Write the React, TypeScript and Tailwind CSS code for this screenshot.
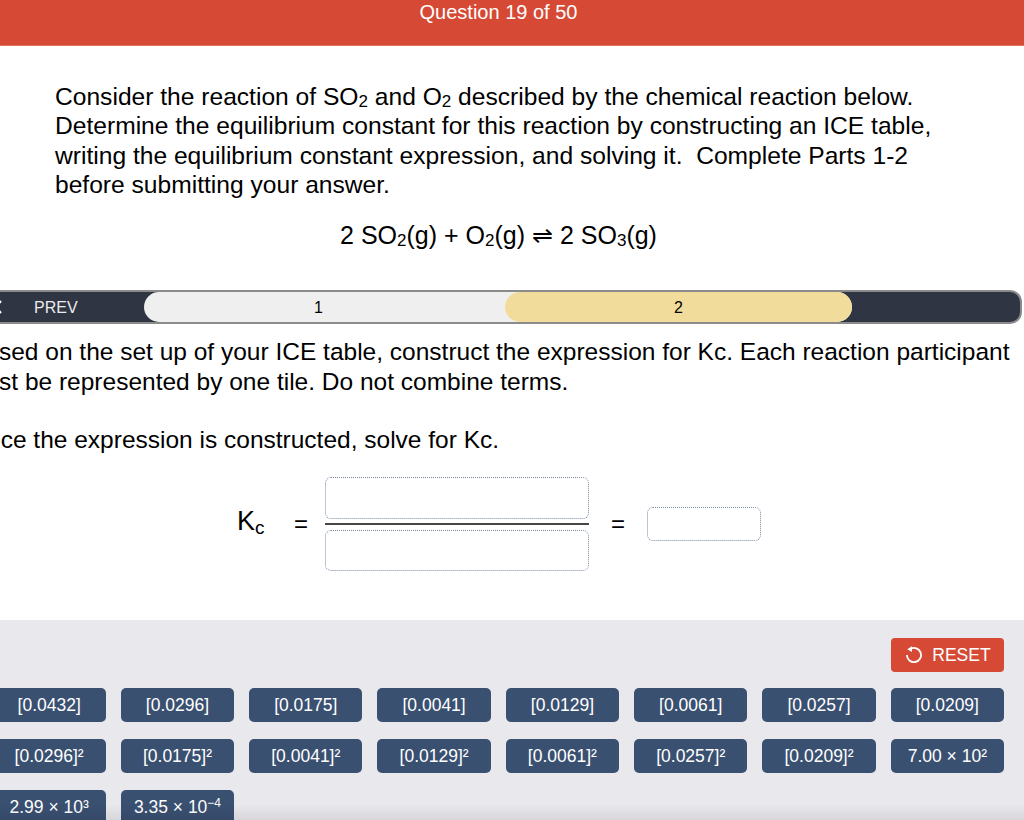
import React from "react";

const row1 = ["[0.0432]", "[0.0296]", "[0.0175]", "[0.0041]", "[0.0129]", "[0.0061]", "[0.0257]", "[0.0209]"];
const row2 = ["[0.0296]²", "[0.0175]²", "[0.0041]²", "[0.0129]²", "[0.0061]²", "[0.0257]²", "[0.0209]²", "7.00 × 10²"];

function Tile({ children }: { children: React.ReactNode }) {
  return (
    <div className="h-[34px] rounded-[5px] bg-[#3a5071] text-white text-[17.5px] flex items-center justify-center whitespace-nowrap">
      {children}
    </div>
  );
}

function Sub({ children }: { children: React.ReactNode }) {
  return <sub className="text-[17px] relative top-[2px] align-baseline">{children}</sub>;
}

export default function App() {
  return (
    <div className="relative w-[1024px] h-[820px] overflow-hidden bg-white font-['Liberation_Sans',Arial,sans-serif] text-black">
      {/* header */}
      <div className="h-[45px] bg-[#d64a35] text-white text-[20px] leading-[24px] text-center pr-[27px]">
        Question 19 of 50
      </div>
      <div className="h-[1px] bg-[#e6735f]" />

      {/* question */}
      <div className="ml-[55px] w-[887px] pt-[36px] text-[24.6px] leading-[29.3px]">
        <div className="whitespace-nowrap">
          Consider the reaction of SO<Sub>2</Sub> and O<Sub>2</Sub> described by the chemical reaction below.
        </div>
        <div className="whitespace-nowrap">
          Determine the equilibrium constant for this reaction by constructing an ICE table,
        </div>
        <div className="whitespace-nowrap">
          writing the equilibrium constant expression, and solving it.{"\u00a0"} Complete Parts 1-2
        </div>
        <div className="whitespace-nowrap">before submitting your answer.</div>
        <div className="mt-[22px] text-center whitespace-nowrap text-[25px]">
          2 SO<Sub>2</Sub>(g) + O<Sub>2</Sub>(g) ⇌ 2 SO<Sub>3</Sub>(g)
        </div>
      </div>

      {/* nav bar */}
      <div className="mt-[40px] -ml-[24px] w-[1046px] h-[34px] flex bg-[#2f3542] border-y-2 border-r-2 border-[#8b8b8b] rounded-r-[12px]">
        <div className="w-[168px] flex items-center shrink-0">
          <div className="w-[27px] flex justify-end">
            <svg width="9" height="14" viewBox="0 0 9 14" fill="none">
              <path d="M7 1 L2 7 L7 13" stroke="#ffffff" strokeWidth="2" />
            </svg>
          </div>
          <span className="ml-[31px] text-[16px] text-[#ececec] pt-[2px]">PREV</span>
        </div>
        <div className="w-[708px] shrink-0 flex rounded-full bg-[#efefef]">
          <div className="flex-1 flex items-center justify-center text-[16px] text-black pr-[12px] pt-[2px]">1</div>
          <div className="w-[347px] rounded-full bg-[#f2dc9c] flex items-center justify-center text-[16px] text-black pt-[2px]">
            2
          </div>
        </div>
        <div className="flex-1" />
      </div>

      {/* instructions */}
      <div className="-ml-[31px] mt-[13px] text-[24.5px] leading-[29.3px]">
        <div className="whitespace-nowrap">
          Based on the set up of your ICE table, construct the expression for Kc. Each reaction participant
        </div>
        <div className="whitespace-nowrap -ml-[4px]">must be represented by one tile. Do not combine terms.</div>
        <div className="whitespace-nowrap mt-[29.3px] -ml-[1px]">Once the expression is constructed, solve for Kc.</div>
      </div>

      {/* Kc expression */}
      <div className="mt-[22px] ml-[237px] flex items-center">
        <div className="w-[57px] text-[27px] leading-none -mt-[4px]">
          K<sub className="text-[19px] align-baseline relative top-[4px]">c</sub>
        </div>
        <div className="w-[31px] text-[24px] leading-none">=</div>
        <div className="w-[264px] flex flex-col">
          <div className="h-[42px] rounded-[6px] border border-dotted border-[#7a8aa3]" />
          <div className="mt-[4px] h-[2px] bg-[#474747]" />
          <div className="mt-[5px] h-[41px] rounded-[6px] border border-dotted border-[#7a8aa3]" />
        </div>
        <div className="ml-[22px] w-[36px] text-[24px] leading-none">=</div>
        <div className="w-[114px] h-[34px] rounded-[6px] border border-dotted border-[#7a8aa3]" />
      </div>

      {/* tile area */}
      <div className="mt-[49px] h-[220px] bg-[#e9e8ed] pt-[18px]">
        <div className="flex justify-end pr-[20px]">
          <div className="w-[113px] h-[34px] rounded-[4px] bg-[#d64a35] flex items-center justify-center gap-[8px] text-white text-[17.5px]">
            <svg width="20" height="20" viewBox="0 0 24 24" fill="none">
              <path d="M7.75 4.64 A8.5 8.5 0 1 1 3.5 12" stroke="#ffffff" strokeWidth="2.2" fill="none" />
              <polygon points="3.8,5.2 9.6,1.4 9.6,8.4" fill="#ffffff" />
            </svg>
            <span>RESET</span>
          </div>
        </div>
        <div className="mt-[16px] -ml-[7.5px] w-[1011.5px] grid grid-cols-8 gap-x-[15px] gap-y-[17px]">
          {row1.map((t) => (
            <Tile key={t}>{t}</Tile>
          ))}
          {row2.map((t) => (
            <Tile key={t}>{t}</Tile>
          ))}
          <Tile>2.99 × 10³</Tile>
          <Tile>
            3.35 × 10<sup className="text-[12px] relative -top-[4px]">−4</sup>
          </Tile>
        </div>
      </div>

      <div className="pointer-events-none absolute bottom-0 left-0 w-full h-[16px] bg-gradient-to-b from-transparent to-[#00000014]" />
    </div>
  );
}
